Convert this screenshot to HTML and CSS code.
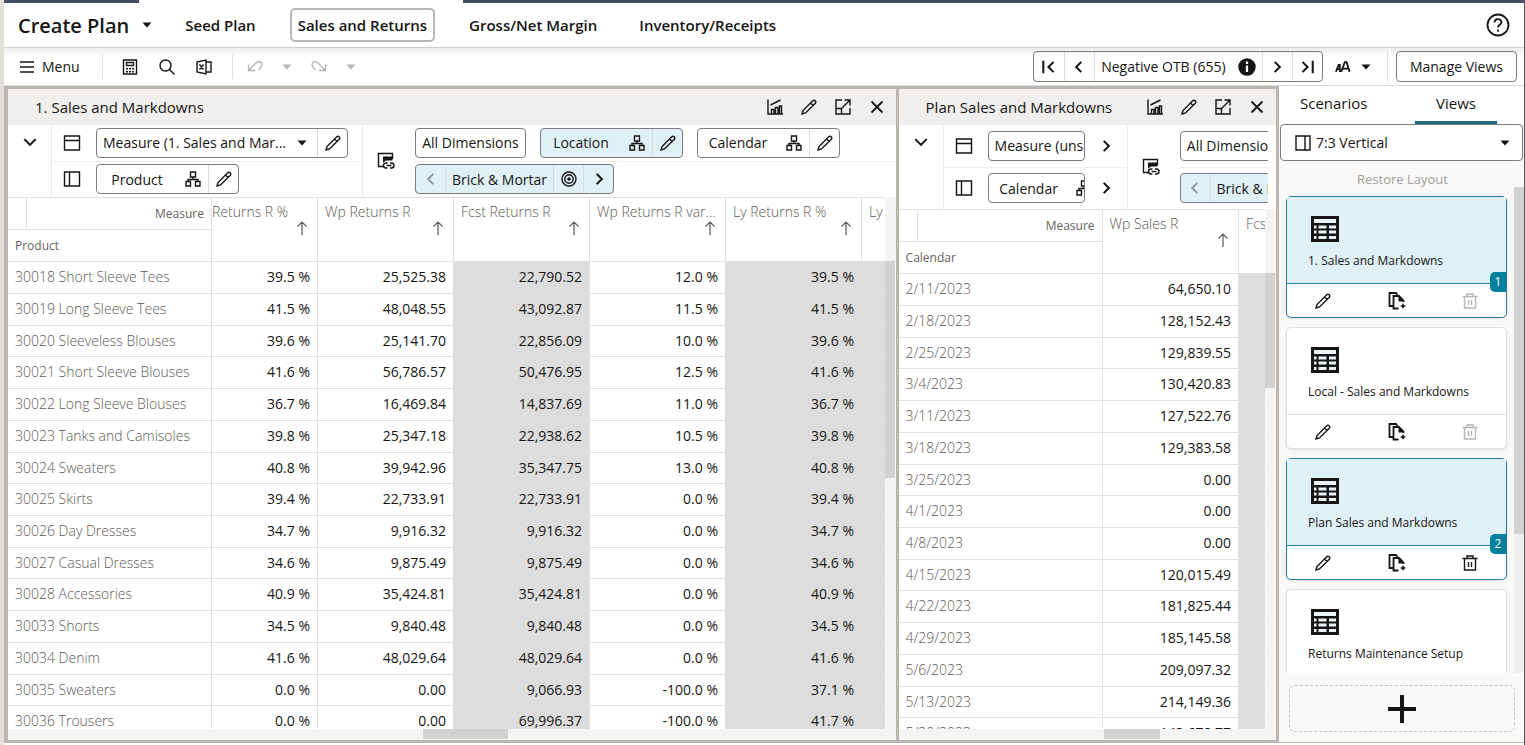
FILE: index.html
```html
<!DOCTYPE html>
<html lang="en">
<head>
  <meta charset="UTF-8">
  <meta name="viewport" content="width=device-width, initial-scale=1.0">
  <title>Create Plan</title>
  <link rel="stylesheet" href="styles.css">
</head>
<body>
  <!-- Icon sprite -->
  <svg class="sprite" aria-hidden="true">
    <symbol id="caret" viewBox="0 0 10 6"><path d="M0.500 0.500h9L5 5.500z" fill="currentColor"/></symbol>
    <symbol id="menu" viewBox="0 0 16 16"><path d="M1 3h14M1 8h14M1 13h14" class="line"/></symbol>
    <symbol id="calc" viewBox="0 0 16 16"><path d="M1.500 1h13v14h-13zM4.500 3.500h7v3h-7z" class="line"/><path d="M4 9h2v1.500H4zM7 9h2v1.500H7zM10 9h2v1.500h-2zM4 12h2v1.500H4zM7 12h2v1.500H7zM10 12h2v1.500h-2z" fill="currentColor"/></symbol>
    <symbol id="search" viewBox="0 0 16 16"><circle cx="6.500" cy="6.500" r="5.500" class="line"/><path d="M10.500 10.500L15.500 15.500" class="line"/></symbol>
    <symbol id="excel" viewBox="0 0 16 16"><path d="M1 3L10 1v14L1 13zM10 3h5v10h-5M3.500 5.500L7.500 10.500M7.500 5.500L3.500 10.500" class="line"/></symbol>
    <symbol id="undo" viewBox="0 0 16 16"><path d="M1.500 5.500V11.500H8M1.500 11.500L9 4Q12.500 1 14.500 4Q16 7 11.500 11" class="line"/></symbol>
    <symbol id="redo" viewBox="0 0 16 16"><path d="M14.500 5.500V11.500H8M14.500 11.500L7 4Q3.500 1 1.500 4Q0 7 4.500 11" class="line"/></symbol>
    <symbol id="first" viewBox="0 0 14 14"><path d="M2 1.500v11M11 2.500L6.500 7l4.500 4.500" class="bold"/></symbol>
    <symbol id="last" viewBox="0 0 14 14"><path d="M12 1.500v11M3 2.500L7.500 7L3 11.500" class="bold"/></symbol>
    <symbol id="prev" viewBox="0 0 14 14"><path d="M9 2.500L4.500 7L9 11.500" class="bold"/></symbol>
    <symbol id="next" viewBox="0 0 14 14"><path d="M5 2.500L9.500 7L5 11.500" class="bold"/></symbol>
    <symbol id="down" viewBox="0 0 14 14"><path d="M2 4.500L7 9.500L12 4.500" class="bold"/></symbol>
    <symbol id="info" viewBox="0 0 18 18"><circle cx="9" cy="9" r="8.700" fill="#161513"/><path d="M9 3.500v2.500M9 7.500v6.500" stroke="#fff" stroke-width="2.200"/></symbol>
    <symbol id="help" viewBox="0 0 24 24"><circle cx="12" cy="12" r="10.500" class="bold"/><path d="M8.500 9.500C8.500 5 15.500 5 15.500 9.200C15.500 11.500 12 11.500 12 14.500M12 16.500v2.300" class="bold"/></symbol>
    <symbol id="fontsize" viewBox="0 0 18 14"><path d="M1 12.500L4 4.500h1.500V12.500M2 9.500h3.500M7 12.500L11 1.500h2L16.500 12.500M8.500 8.800h7" fill="none" stroke="currentColor" stroke-width="2"/></symbol>
    <symbol id="chart" viewBox="0 0 16 16"><path d="M1 0.500V15.500M0.500 15h15.500M4.500 15V10.500h2.500V15M8.500 15V8.500h2.500V15M12.500 15V7h2V15M3.500 6L13.500 1" class="line"/></symbol>
    <symbol id="pencil" viewBox="0 0 16 16"><path d="M1 15L2 11.500L11.500 1.900Q12.800 0.600 14.200 1.800Q15.400 3.200 14.100 4.500L4.500 14ZM9.500 4L12 6.500" class="line"/></symbol>
    <symbol id="expand" viewBox="0 0 16 16"><path d="M7 1H1v14h14V9M9.500 1H15V6.500M15 1L5.500 10.500M1 9.500h5.500V15" class="line"/></symbol>
    <symbol id="close" viewBox="0 0 16 16"><path d="M2.500 2.500l11 11M13.500 2.500l-11 11" class="bold"/></symbol>
    <symbol id="rows" viewBox="0 0 18 16"><path d="M1.500 1h15v14h-15zM1.500 5.500h15" class="line"/></symbol>
    <symbol id="cols" viewBox="0 0 18 16"><path d="M1.500 1h15v14h-15zM6.500 1v14" class="line"/></symbol>
    <symbol id="split" viewBox="0 0 16 16"><path d="M1 1h14v14H1zM10 1v14" class="line"/></symbol>
    <symbol id="pages" viewBox="0 0 18 18"><path d="M6 14.500H1.500V1.500h14V7" class="line"/><path d="M6 4.500h9.500v4H9L6 10.500z" fill="currentColor"/><path d="M10.500 11h-1.500a2.500 2.500 0 0 0 0 5h1.500M13 11h1.500a2.500 2.500 0 0 1 0 5H13M9.500 13.500h5" class="line"/></symbol>
    <symbol id="org" viewBox="0 0 16 16"><path d="M5.500 1h5v5h-5zM8 6v2.500M3 10.500v-2h10v2M1 10.500h4.500V15H1zM10.500 10.500H15V15h-4.500z" class="line"/></symbol>
    <symbol id="target" viewBox="0 0 16 16"><circle cx="8" cy="8" r="7" class="line"/><circle cx="8" cy="8" r="4.200" class="line"/><circle cx="8" cy="8" r="1.800" fill="currentColor"/></symbol>
    <symbol id="up" viewBox="0 0 12 14"><path d="M6 1v13M1.500 5.500L6 1l4.500 4.500" fill="none" stroke="currentColor" stroke-width="1.200"/></symbol>
    <symbol id="table" viewBox="0 0 28 26"><path d="M0 0h28v26H0z" fill="#161513"/><path d="M3 3h22v4H3zM3 9.500h2.500v3H3zM7.500 9.500h8v3h-8zM18 9.500h7v3h-7zM3 14.500h2.500v3H3zM7.500 14.500h8v3h-8zM18 14.500h7v3h-7zM3 20h2.500v3H3zM7.500 20h8v3h-8zM18 20h7v3h-7z" fill="#eaf4f8"/></symbol>
    <symbol id="copy" viewBox="0 0 18 18"><path d="M5.500 14H1.500V1H8l1.500 2M10.500 16.500H5.500V4H11l4.500 4.500V10" class="bold"/><path d="M10.500 3.500L16 9.500h-5.500zM15 11l1 2 2 1-2 1-1 2-1-2-2-1 2-1z" fill="currentColor"/></symbol>
    <symbol id="trash" viewBox="0 0 16 16"><path d="M0.500 3.500h15M5 3.500V1h6v2.500M2.500 3.500V15h11V3.500M6.500 7v5M9.500 7v5" class="line"/></symbol>
    <symbol id="plus" viewBox="0 0 28 28"><path d="M14 0v28M0 14h28" stroke="currentColor" stroke-width="4"/></symbol>
  </svg>

  <div class="page">
    <div class="strip"><span></span><span></span></div>

    <header class="topbar">
      <button class="plan" type="button">Create Plan <svg class="caret"><use href="#caret"/></svg></button>
      <nav class="steps">
        <a href="#seed">Seed Plan</a>
        <a href="#sales" class="active">Sales and Returns</a>
        <a href="#margin">Gross/Net Margin</a>
        <a href="#inventory">Inventory/Receipts</a>
      </nav>
      <button class="help" type="button" aria-label="Help"><svg><use href="#help"/></svg></button>
    </header>

    <div class="toolbar">
      <button class="menu" type="button"><svg class="icon"><use href="#menu"/></svg>Menu</button>
      <div class="tools">
        <button type="button" aria-label="Calculate"><svg class="icon"><use href="#calc"/></svg></button>
        <button type="button" aria-label="Search"><svg class="icon"><use href="#search"/></svg></button>
        <button type="button" aria-label="Export to Excel"><svg class="icon"><use href="#excel"/></svg></button>
      </div>
      <div class="history">
        <button type="button" aria-label="Undo" disabled><svg class="icon"><use href="#undo"/></svg></button>
        <button type="button" aria-label="Undo list" disabled><svg class="caret"><use href="#caret"/></svg></button>
        <button type="button" aria-label="Redo" disabled><svg class="icon"><use href="#redo"/></svg></button>
        <button type="button" aria-label="Redo list" disabled><svg class="caret"><use href="#caret"/></svg></button>
      </div>
      <div class="chip pager">
        <button type="button" aria-label="First"><svg class="icon"><use href="#first"/></svg></button>
        <button type="button" aria-label="Previous"><svg class="icon"><use href="#prev"/></svg></button>
        <button class="alert" type="button">Negative OTB (655)<svg class="info"><use href="#info"/></svg></button>
        <button type="button" aria-label="Next"><svg class="icon"><use href="#next"/></svg></button>
        <button type="button" aria-label="Last"><svg class="icon"><use href="#last"/></svg></button>
      </div>
      <button class="font-size" type="button" aria-label="Text size"><svg class="icon"><use href="#fontsize"/></svg><svg class="caret"><use href="#caret"/></svg></button>
      <div class="manage"><button class="chip" type="button">Manage Views</button></div>
    </div>

    <div class="content">
      <main class="boards">
        <section class="board">
          <div class="board-head">
            <h2>1. Sales and Markdowns</h2>
            <button type="button" aria-label="Chart"><svg class="icon"><use href="#chart"/></svg></button>
            <button type="button" aria-label="Edit"><svg class="icon"><use href="#pencil"/></svg></button>
            <button type="button" aria-label="Maximize"><svg class="icon"><use href="#expand"/></svg></button>
            <button type="button" aria-label="Close"><svg class="icon"><use href="#close"/></svg></button>
          </div>
          <div class="pivot">
            <button class="collapse" type="button" aria-label="Collapse"><svg class="icon"><use href="#down"/></svg></button>
            <div class="axes">
              <div class="axis">
                <svg class="axis-icon"><use href="#rows"/></svg>
                <div class="chip">
                  <select class="measure" aria-label="Measure"><option>Measure (1. Sales and Mar...</option></select>
                  <svg class="caret"><use href="#caret"/></svg>
                  <button class="tool" type="button" aria-label="Edit measures"><svg class="icon"><use href="#pencil"/></svg></button>
                </div>
              </div>
              <div class="axis">
                <svg class="axis-icon"><use href="#cols"/></svg>
                <div class="chip">
                  <button class="dim" type="button">Product</button>
                  <button class="level" type="button" aria-label="Product levels"><svg class="icon"><use href="#org"/></svg></button>
                  <button class="tool" type="button" aria-label="Edit product"><svg class="icon"><use href="#pencil"/></svg></button>
                </div>
              </div>
            </div>
            <div class="paging">
              <svg class="page-icon"><use href="#pages"/></svg>
              <div class="pages">
                <div class="page-row">
                  <button class="chip all" type="button">All Dimensions</button>
                  <div class="chip selected">
                    <button class="dim" type="button">Location</button>
                    <button class="level" type="button" aria-label="Location levels"><svg class="icon"><use href="#org"/></svg></button>
                    <button class="tool" type="button" aria-label="Edit location"><svg class="icon"><use href="#pencil"/></svg></button>
                  </div>
                  <div class="chip">
                    <button class="dim" type="button">Calendar</button>
                    <button class="level" type="button" aria-label="Calendar levels"><svg class="icon"><use href="#org"/></svg></button>
                    <button class="tool" type="button" aria-label="Edit calendar"><svg class="icon"><use href="#pencil"/></svg></button>
                  </div>
                </div>
                <div class="page-row">
                  <div class="chip selected">
                    <button class="tool first" type="button" aria-label="Previous location" disabled><svg class="icon"><use href="#prev"/></svg></button>
                    <button class="tool position" type="button">Brick &amp; Mortar</button>
                    <button class="tool" type="button" aria-label="Locate"><svg class="icon"><use href="#target"/></svg></button>
                    <button class="tool" type="button" aria-label="Next location"><svg class="icon"><use href="#next"/></svg></button>
                  </div>
                </div>
              </div>
            </div>
          </div>
          <div class="grid">
            <div class="viewport">
              <table class="sales">
                <colgroup><col class="c-head"><col class="c-first"><col><col><col><col><col></colgroup>
                <thead>
                  <tr>
                    <th class="corner"><div class="corner-top">Measure</div><div class="corner-bottom">Product</div></th>
                    <th class="cut"><span>Returns R %</span><svg><use href="#up"/></svg></th>
                    <th><span>Wp Returns R</span><svg><use href="#up"/></svg></th>
                    <th><span>Fcst Returns R</span><svg><use href="#up"/></svg></th>
                    <th><span>Wp Returns R var...</span><svg><use href="#up"/></svg></th>
                    <th><span>Ly Returns R %</span><svg><use href="#up"/></svg></th>
                    <th><span>Ly</span></th>
                  </tr>
                </thead>
                <tbody>
                  <tr><th>30018 Short Sleeve Tees</th><td>39.5 %</td><td>25,525.38</td><td class="ro">22,790.52</td><td>12.0 %</td><td class="ro">39.5 %</td><td class="ro"></td></tr>
                  <tr><th>30019 Long Sleeve Tees</th><td>41.5 %</td><td>48,048.55</td><td class="ro">43,092.87</td><td>11.5 %</td><td class="ro">41.5 %</td><td class="ro"></td></tr>
                  <tr><th>30020 Sleeveless Blouses</th><td>39.6 %</td><td>25,141.70</td><td class="ro">22,856.09</td><td>10.0 %</td><td class="ro">39.6 %</td><td class="ro"></td></tr>
                  <tr><th>30021 Short Sleeve Blouses</th><td>41.6 %</td><td>56,786.57</td><td class="ro">50,476.95</td><td>12.5 %</td><td class="ro">41.6 %</td><td class="ro"></td></tr>
                  <tr><th>30022 Long Sleeve Blouses</th><td>36.7 %</td><td>16,469.84</td><td class="ro">14,837.69</td><td>11.0 %</td><td class="ro">36.7 %</td><td class="ro"></td></tr>
                  <tr><th>30023 Tanks and Camisoles</th><td>39.8 %</td><td>25,347.18</td><td class="ro">22,938.62</td><td>10.5 %</td><td class="ro">39.8 %</td><td class="ro"></td></tr>
                  <tr><th>30024 Sweaters</th><td>40.8 %</td><td>39,942.96</td><td class="ro">35,347.75</td><td>13.0 %</td><td class="ro">40.8 %</td><td class="ro"></td></tr>
                  <tr><th>30025 Skirts</th><td>39.4 %</td><td>22,733.91</td><td class="ro">22,733.91</td><td>0.0 %</td><td class="ro">39.4 %</td><td class="ro"></td></tr>
                  <tr><th>30026 Day Dresses</th><td>34.7 %</td><td>9,916.32</td><td class="ro">9,916.32</td><td>0.0 %</td><td class="ro">34.7 %</td><td class="ro"></td></tr>
                  <tr><th>30027 Casual Dresses</th><td>34.6 %</td><td>9,875.49</td><td class="ro">9,875.49</td><td>0.0 %</td><td class="ro">34.6 %</td><td class="ro"></td></tr>
                  <tr><th>30028 Accessories</th><td>40.9 %</td><td>35,424.81</td><td class="ro">35,424.81</td><td>0.0 %</td><td class="ro">40.9 %</td><td class="ro"></td></tr>
                  <tr><th>30033 Shorts</th><td>34.5 %</td><td>9,840.48</td><td class="ro">9,840.48</td><td>0.0 %</td><td class="ro">34.5 %</td><td class="ro"></td></tr>
                  <tr><th>30034 Denim</th><td>41.6 %</td><td>48,029.64</td><td class="ro">48,029.64</td><td>0.0 %</td><td class="ro">41.6 %</td><td class="ro"></td></tr>
                  <tr><th>30035 Sweaters</th><td>0.0 %</td><td>0.00</td><td class="ro">9,066.93</td><td>-100.0 %</td><td class="ro">37.1 %</td><td class="ro"></td></tr>
                  <tr><th>30036 Trousers</th><td>0.0 %</td><td>0.00</td><td class="ro">69,996.37</td><td>-100.0 %</td><td class="ro">41.7 %</td><td class="ro"></td></tr>
                </tbody>
              </table>
            </div>
            <div class="vbar"><span></span></div>
            <div class="hbar"><span></span></div>
          </div>
        </section>

        <section class="board narrow">
          <div class="board-head">
            <h2>Plan Sales and Markdowns</h2>
            <button type="button" aria-label="Chart"><svg class="icon"><use href="#chart"/></svg></button>
            <button type="button" aria-label="Edit"><svg class="icon"><use href="#pencil"/></svg></button>
            <button type="button" aria-label="Maximize"><svg class="icon"><use href="#expand"/></svg></button>
            <button type="button" aria-label="Close"><svg class="icon"><use href="#close"/></svg></button>
          </div>
          <div class="pivot">
            <button class="collapse" type="button" aria-label="Collapse"><svg class="icon"><use href="#down"/></svg></button>
            <div class="axes">
              <div class="axis">
                <svg class="axis-icon"><use href="#rows"/></svg>
                <div class="clip"><div class="chip"><select class="measure" aria-label="Measure"><option>Measure (unsaved)</option></select></div></div>
                <button class="more" type="button" aria-label="Scroll measures"><svg class="icon"><use href="#next"/></svg></button>
              </div>
              <div class="axis">
                <svg class="axis-icon"><use href="#cols"/></svg>
                <div class="clip">
                  <div class="chip">
                    <button class="dim" type="button">Calendar</button>
                    <button class="level" type="button" aria-label="Calendar levels"><svg class="icon"><use href="#org"/></svg></button>
                    <button class="tool" type="button" aria-label="Edit calendar"><svg class="icon"><use href="#pencil"/></svg></button>
                  </div>
                </div>
                <button class="more" type="button" aria-label="Scroll dimensions"><svg class="icon"><use href="#next"/></svg></button>
              </div>
            </div>
            <div class="paging">
              <svg class="page-icon"><use href="#pages"/></svg>
              <div class="pages">
                <div class="page-row"><button class="chip all" type="button">All Dimensions</button></div>
                <div class="page-row">
                  <div class="chip selected">
                    <button class="tool first" type="button" aria-label="Previous location" disabled><svg class="icon"><use href="#prev"/></svg></button>
                    <button class="tool position" type="button">Brick &amp; Mortar</button>
                  </div>
                </div>
              </div>
            </div>
          </div>
          <div class="grid">
            <div class="viewport">
              <table class="weeks">
                <colgroup><col class="c-head"><col><col></colgroup>
                <thead>
                  <tr>
                    <th class="corner"><div class="corner-top">Measure</div><div class="corner-bottom">Calendar</div></th>
                    <th><span>Wp Sales R</span><svg><use href="#up"/></svg></th>
                    <th><span>Fcst Sales R</span></th>
                  </tr>
                </thead>
                <tbody>
                  <tr><th>2/11/2023</th><td>64,650.10</td><td class="ro"></td></tr>
                  <tr><th>2/18/2023</th><td>128,152.43</td><td class="ro"></td></tr>
                  <tr><th>2/25/2023</th><td>129,839.55</td><td class="ro"></td></tr>
                  <tr><th>3/4/2023</th><td>130,420.83</td><td class="ro"></td></tr>
                  <tr><th>3/11/2023</th><td>127,522.76</td><td class="ro"></td></tr>
                  <tr><th>3/18/2023</th><td>129,383.58</td><td class="ro"></td></tr>
                  <tr><th>3/25/2023</th><td>0.00</td><td class="ro"></td></tr>
                  <tr><th>4/1/2023</th><td>0.00</td><td class="ro"></td></tr>
                  <tr><th>4/8/2023</th><td>0.00</td><td class="ro"></td></tr>
                  <tr><th>4/15/2023</th><td>120,015.49</td><td class="ro"></td></tr>
                  <tr><th>4/22/2023</th><td>181,825.44</td><td class="ro"></td></tr>
                  <tr><th>4/29/2023</th><td>185,145.58</td><td class="ro"></td></tr>
                  <tr><th>5/6/2023</th><td>209,097.32</td><td class="ro"></td></tr>
                  <tr><th>5/13/2023</th><td>214,149.36</td><td class="ro"></td></tr>
                  <tr><th>5/20/2023</th><td>143,678.77</td><td class="ro"></td></tr>
                </tbody>
              </table>
            </div>
            <div class="vbar"><span></span></div>
            <div class="hbar"><span></span></div>
          </div>
        </section>
      </main>

      <aside class="sidebar">
        <nav class="tabs">
          <a href="#scenarios">Scenarios</a>
          <a href="#views" class="active">Views</a>
        </nav>
        <div class="layout">
          <svg class="icon"><use href="#split"/></svg>
          <select aria-label="Layout"><option>7:3 Vertical</option></select>
          <svg class="caret"><use href="#caret"/></svg>
        </div>
        <div class="views">
          <div class="views-main">
            <button class="restore" type="button" disabled>Restore Layout</button>
            <div class="cards">
              <article class="card open">
                <div class="card-body"><svg><use href="#table"/></svg>1. Sales and Markdowns<span class="badge">1</span></div>
                <div class="card-foot">
                  <button type="button" aria-label="Edit view"><svg class="icon"><use href="#pencil"/></svg></button>
                  <button type="button" aria-label="Copy view"><svg class="icon copy"><use href="#copy"/></svg></button>
                  <button type="button" aria-label="Delete view" disabled><svg class="icon"><use href="#trash"/></svg></button>
                </div>
              </article>
              <article class="card">
                <div class="card-body"><svg><use href="#table"/></svg>Local - Sales and Markdowns</div>
                <div class="card-foot">
                  <button type="button" aria-label="Edit view"><svg class="icon"><use href="#pencil"/></svg></button>
                  <button type="button" aria-label="Copy view"><svg class="icon copy"><use href="#copy"/></svg></button>
                  <button type="button" aria-label="Delete view" disabled><svg class="icon"><use href="#trash"/></svg></button>
                </div>
              </article>
              <article class="card open">
                <div class="card-body"><svg><use href="#table"/></svg>Plan Sales and Markdowns<span class="badge">2</span></div>
                <div class="card-foot">
                  <button type="button" aria-label="Edit view"><svg class="icon"><use href="#pencil"/></svg></button>
                  <button type="button" aria-label="Copy view"><svg class="icon copy"><use href="#copy"/></svg></button>
                  <button type="button" aria-label="Delete view"><svg class="icon"><use href="#trash"/></svg></button>
                </div>
              </article>
              <article class="card">
                <div class="card-body"><svg><use href="#table"/></svg>Returns Maintenance Setup</div>
              </article>
            </div>
          </div>
          <div class="vbar"><span></span></div>
        </div>
        <button class="add" type="button" aria-label="Add view"><svg><use href="#plus"/></svg></button>
      </aside>
    </div>
  </div>
</body>
</html>
```
FILE: styles.css
```css
* {
  box-sizing: border-box;
}

body {
  margin: 0;
  font-family: "Open Sans", "Noto Sans", sans-serif;
  font-size: 14px;
  color: #161513;
  background-color: #e3dfda;
}

button, select {
  font: inherit;
  color: inherit;
  background: none;
  border: none;
  padding: 0;
  margin: 0;
  white-space: nowrap;
  cursor: pointer;
}

select {
  appearance: none;
}

button {
  display: flex;
  align-items: center;
  justify-content: center;
}

button:disabled {
  color: #b8b5b2;
}

a {
  color: inherit;
  text-decoration: none;
}

.sprite {
  display: none;
}

.icon {
  width: 16px;
  height: 16px;
  flex: none;
}

.caret {
  width: 10px;
  height: 6px;
  flex: none;
}

.line, .bold {
  fill: none;
  stroke: currentColor;
  stroke-width: 1.4;
}

.bold {
  stroke-width: 1.8;
}

.page {
  height: 100vh;
  display: flex;
  flex-direction: column;
  margin-left: 4px;
  padding-bottom: 2px;
  border-right: 1px solid #55565e;
  background-color: #fff;
}

/* Header */
.strip {
  display: flex;
  gap: 324px;
  height: 3px;
}

.strip span {
  width: 135px;
  background-color: #464a63;
}

.strip span:last-child {
  flex: 1;
}

.topbar {
  display: flex;
  align-items: center;
  height: 44px;
  padding: 0 14px;
}

.plan {
  gap: 13px;
  font-size: 20px;
  font-weight: 550;
}

.steps {
  display: flex;
  gap: 26px;
  margin-left: 25px;
  font-size: 15px;
  font-weight: 550;
}

.steps a {
  padding: 0 6px;
  line-height: 30px;
  border: 2px solid transparent;
  border-radius: 5px;
}

.steps a.active {
  border-color: #b9b5b1;
}

.help {
  margin-left: auto;
}

.help svg {
  width: 24px;
  height: 24px;
}

/* Toolbar */
.toolbar {
  display: flex;
  align-items: center;
  height: 39px;
  padding-right: 7px;
  border-top: 1px solid #cfcdcb;
  border-bottom: 1px solid #dedcda;
  background: linear-gradient(#ededed, #fff 9px);
  font-weight: 500;
}

.menu {
  gap: 7px;
  margin-left: 15px;
}

.tools, .history {
  display: flex;
  height: 25px;
  border-left: 1px solid #e2e0de;
}

.tools {
  margin-left: 22px;
  padding-left: 9px;
}

.tools button {
  width: 37px;
}

.history {
  margin-left: 9px;
  padding-left: 6px;
}

.history button {
  width: 32px;
}

.chip {
  display: flex;
  flex: none;
  height: 30px;
  border: 1px solid #7d7b79;
  border-radius: 4px;
  overflow: hidden;
  font-weight: 500;
}

.pager {
  margin-left: auto;
  height: 31px;
}

.pager button {
  width: 30px;
  border-left: 1px solid #dedcda;
}

.pager button:first-child {
  border-left: none;
}

.pager .alert {
  width: 168px;
  gap: 12px;
}

.info {
  width: 18px;
  height: 18px;
}

.font-size {
  gap: 10px;
  margin: 0 16px 0 12px;
}

.manage {
  padding-left: 8px;
  border-left: 1px solid #e2e0de;
}

.manage .chip {
  height: 31px;
  padding: 0 13px;
}

/* Boards */
.content {
  display: flex;
  flex: 1;
  min-height: 0;
}

.boards {
  display: grid;
  grid-template-columns: 70% minmax(0, 1fr);
  gap: 3px;
  flex: 1;
  min-width: 0;
  padding: 3px 3px 3px 4px;
  background-color: #bbb6b0;
}

.board {
  display: flex;
  flex-direction: column;
  min-width: 0;
  min-height: 0;
  background-color: #fff;
}

.board-head {
  display: flex;
  align-items: center;
  height: 36px;
  padding: 0 2px 0 27px;
  background-color: #f0efed;
}

.board-head h2 {
  flex: 1;
  margin: 0;
  font-size: 15px;
  font-weight: 500;
}

.board-head button {
  width: 34px;
  height: 34px;
}

.pivot {
  display: flex;
  height: 72px;
}

.collapse {
  width: 43px;
  padding-bottom: 38px;
}

.axes {
  display: flex;
  flex-direction: column;
  width: 312px;
  flex: none;
  border: solid #eceae8;
  border-width: 0 1px;
}

.axis, .page-row {
  display: flex;
  align-items: center;
  flex: 1;
}

.axis + .axis, .page-row + .page-row {
  border-top: 1px solid #f0efed;
}

.axis-icon {
  flex: none;
  width: 18px;
  height: 16px;
  margin: 0 15px 0 11px;
}

.measure {
  width: 204px;
  padding-left: 6px;
}

.chip .caret {
  align-self: center;
  margin-right: 10px;
  margin-left: -4px;
}

.dim {
  flex: none;
  width: 80px;
}

.level {
  flex: none;
  width: 31px;
}

.tool {
  flex: none;
  width: 30px;
  border-left: 1px solid #d6dcde;
}

.tool.first {
  width: 29px;
  border-left: none;
  color: #8f9aa0;
}

.tool.position {
  width: 108px;
}

.selected {
  background-color: #e0f0f7;
}

.all {
  width: 111px;
}

.paging {
  display: flex;
  flex: 1;
  min-width: 0;
}

.page-icon {
  width: 18px;
  height: 18px;
  margin: 0 20px 0 14px;
  align-self: center;
  flex: none;
}

.pages {
  display: flex;
  flex-direction: column;
  flex: 1;
  min-width: 0;
  overflow: hidden;
}

.page-row {
  gap: 14px;
}

.narrow .pivot {
  height: 84px;
}

.narrow .collapse {
  width: 44px;
  padding-bottom: 50px;
}

.narrow .axes {
  width: 185px;
}

.narrow .pages {
  margin-right: 8px;
}

.clip {
  width: 97px;
  overflow: hidden;
}

.more {
  flex: 1;
}

/* Tables */
.grid {
  display: grid;
  grid-template-columns: minmax(0, 1fr) 11px;
  grid-template-rows: minmax(0, 1fr) 11px;
  flex: 1;
  min-height: 0;
  background-color: #f4f4f4;
}

.viewport {
  overflow: hidden;
  background-color: #fff;
}

table {
  table-layout: fixed;
  border-collapse: separate;
  border-spacing: 0;
}

.sales {
  width: 990px;
}

.weeks {
  width: 477px;
}

.c-head {
  width: 204px;
}

.c-first {
  width: 106px;
}

th, td {
  height: 32px;
  padding: 0 7px 1px;
  border: solid #e1e1e1;
  border-width: 0 1px 1px 0;
  text-align: right;
  line-height: 20px;
}

/* Keeps the average row pitch between 31 and 32 */
tbody tr:nth-child(7n+3) > *, tbody tr:nth-child(7n) > * {
  height: 31px;
}

th {
  font-weight: 350;
  color: #5c5955;
  text-align: left;
}

thead th {
  height: 64px;
  padding: 4px 7px 0;
  border-top: 1px solid #e1e1e1;
  vertical-align: top;
}

thead th span {
  display: block;
  overflow: hidden;
  white-space: nowrap;
}

thead th svg {
  display: block;
  width: 12px;
  height: 14px;
  margin: -1px 2px 0 auto;
}

thead .corner {
  padding: 0;
  font-size: 12px;
  font-weight: 400;
  color: #66635f;
}

thead .cut {
  padding-left: 0;
}

.corner-top, .corner-bottom {
  padding: 0 7px;
  line-height: 31px;
}

.corner-top {
  margin-left: 18px;
  border-left: 1px solid #e1e1e1;
  text-align: right;
}

.corner-bottom {
  border-top: 1px solid #e1e1e1;
}

.ro {
  background-color: #dddddd;
}

.vbar {
  padding-top: 64px;
}

.vbar span, .hbar span {
  display: block;
  background-color: #d3d2d2;
}

.vbar span {
  width: 10px;
  height: 217px;
}

.hbar span {
  width: 85px;
  height: 10px;
  margin-left: 415px;
}

.narrow .vbar span {
  height: 115px;
}

.narrow .hbar span {
  width: 56px;
  margin-left: 205px;
}

/* Sidebar */
.sidebar {
  display: flex;
  flex-direction: column;
  width: 245px;
  flex: none;
  border-bottom: 1px solid #bbb6b0;
  background-color: #faf9f8;
}

.tabs {
  display: flex;
  padding: 0 27px 0 13px;
  justify-content: space-between;
  background-color: #fff;
  font-size: 15px;
}

.tabs a {
  padding: 0 8px;
  line-height: 35px;
  border-bottom: 3px solid transparent;
}

.tabs a.active {
  padding: 0 21px;
  border-color: #226b7f;
}

.layout {
  display: flex;
  align-items: center;
  height: 37px;
  margin: 0 1px;
  padding: 0 12px 0 14px;
  border: 1px solid #7d7b79;
  border-radius: 4px;
  background-color: #fff;
}

.layout select {
  flex: 1;
  padding-left: 5px;
}

.views {
  display: flex;
  flex: 1;
  min-height: 0;
}

.views-main {
  flex: 1;
  min-width: 0;
  padding: 9px 7px 0;
  overflow: hidden;
}

.restore {
  margin: 0 auto;
  padding-left: 12px;
  font-size: 13px;
  line-height: 18px;
}

.restore:disabled {
  color: #a29f9c;
}

.cards {
  display: flex;
  flex-direction: column;
  gap: 9px;
  padding-top: 8px;
}

.card {
  border: 1px solid #dedfe6;
  border-radius: 5px;
  background-color: #fff;
  box-shadow: 0 1px 3px rgba(0, 0, 0, 0.1);
  font-size: 12px;
}

.card-body {
  position: relative;
  height: 87px;
  padding: 19px 21px 0;
  border-bottom: 1px solid #dedfe6;
  line-height: 18px;
}

.card-body svg {
  display: block;
  width: 28px;
  height: 26px;
  margin: 0 0 10px 3px;
}

.card-foot {
  display: flex;
  justify-content: space-between;
  padding: 0 20px;
}

.card-foot button {
  width: 32px;
  height: 33px;
}

.icon.copy {
  width: 18px;
  height: 18px;
}

.open, .open .card-body {
  border-color: #227e9e;
}

.open .card-body {
  background-color: #e0f0f7;
}

.badge {
  position: absolute;
  right: 0;
  bottom: -9px;
  width: 16px;
  border-radius: 5px 0 0 5px;
  background-color: #04809f;
  color: #fff;
  line-height: 20px;
  text-align: center;
}

.views .vbar {
  margin-top: 26px;
  padding: 0;
  background-color: #f0efee;
}

.views .vbar span {
  height: 347px;
}

.add {
  height: 47px;
  margin: 12px 9px 10px 10px;
  border: 1px dashed #c4c1be;
  border-radius: 6px;
}

.add svg {
  width: 28px;
  height: 28px;
}
```
